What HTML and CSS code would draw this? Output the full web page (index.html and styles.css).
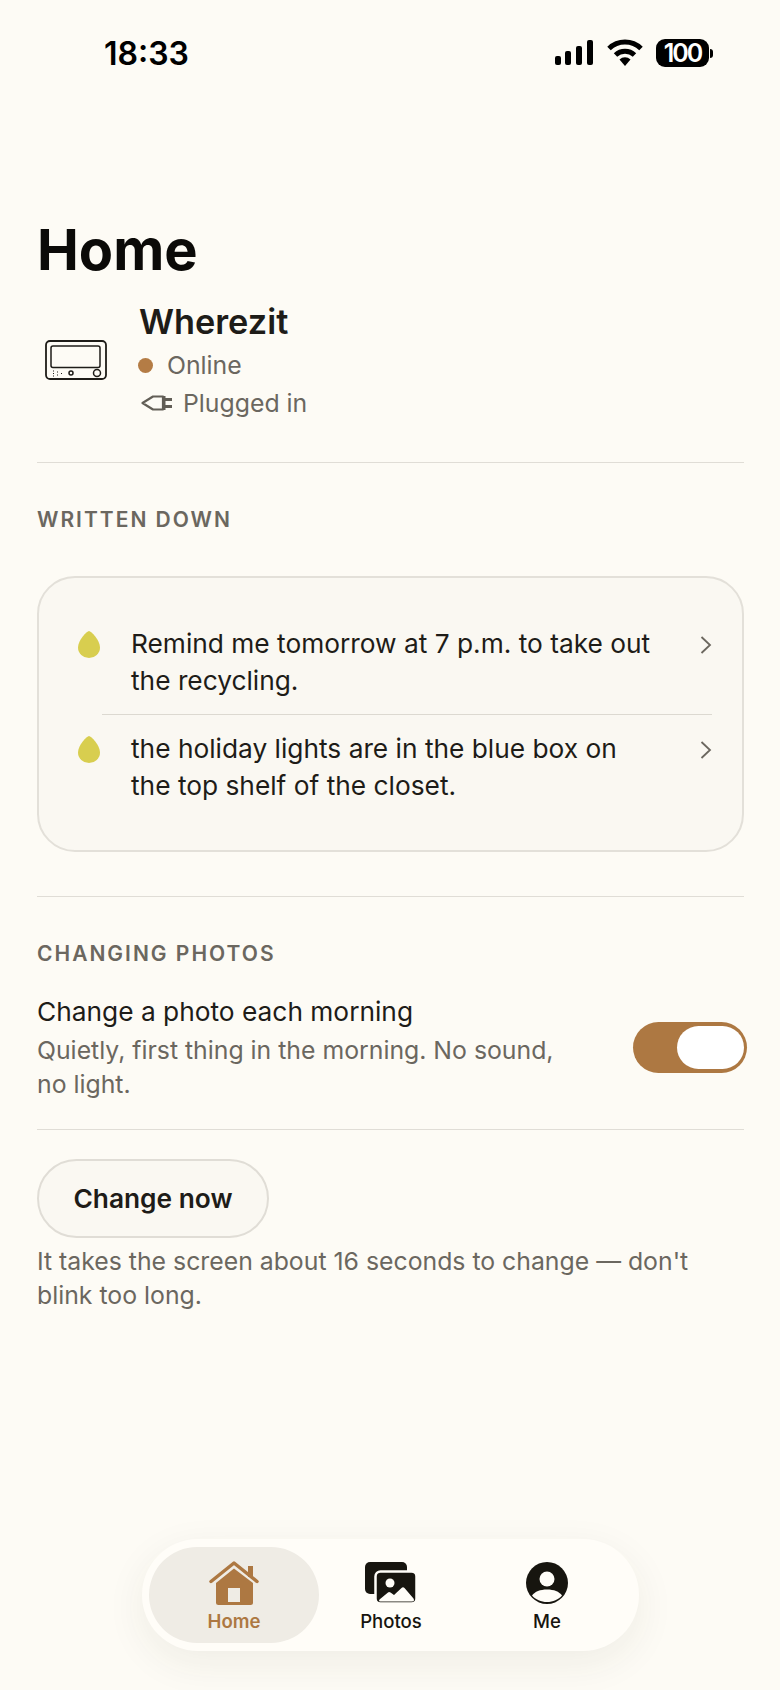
FILE: index.html
```html
<!DOCTYPE html>
<html lang="en">

<head>
    <meta charset="UTF-8">
    <meta name="viewport" content="width=device-width, initial-scale=1.0">
    <title>Home</title>
    <link rel="stylesheet" href="styles.css">
</head>

<body>
    <div class="screen">
        <div class="status-bar">
            <span class="time">18:33</span>
            <div class="status-icons">
                <svg width="40" height="26" viewBox="0 0 40 26">
                    <rect x="1" y="16" width="6" height="9" rx="2" />
                    <rect x="11" y="11" width="6" height="14" rx="2" />
                    <rect x="22" y="6" width="6" height="19" rx="2" />
                    <rect x="33" y="0" width="6" height="25" rx="2" />
                </svg>
                <svg width="36" height="28" viewBox="0 0 36 28">
                    <path d="M2 9.500a23 23 0 0 1 32 0" fill="none" stroke="#000" stroke-width="5" />
                    <path d="M8.500 16a14 14 0 0 1 19 0" fill="none" stroke="#000" stroke-width="5" />
                    <path d="M12.500 20.500a8 8 0 0 1 11 0L18 27z" />
                </svg>
                <div class="battery">
                    <span class="battery-level">100</span>
                    <span class="battery-cap"></span>
                </div>
            </div>
        </div>

        <main class="content">
            <h1 class="page-title">Home</h1>

            <div class="device">
                <svg class="device-icon" width="62" height="40" viewBox="0 0 62 40" fill="none" stroke="#1e1c18">
                    <rect x="1" y="1" width="60" height="38" rx="4" stroke-width="1.800" />
                    <rect x="6" y="6" width="49" height="21.500" rx="2" stroke-width="1.500" />
                    <circle cx="26" cy="33" r="2" stroke-width="1.500" />
                    <circle cx="52" cy="33" r="3.500" stroke-width="1.500" />
                    <path d="M8 31h1M8 33.500h1M8 36h1M12 32h1M12 35h1M16 33.500h1" stroke-width="1" />
                </svg>
                <div class="device-info">
                    <div class="device-name">Wherezit</div>
                    <div class="device-line online"><span class="dot"></span>Online</div>
                    <div class="device-line plugged">
                        <svg width="32" height="18" viewBox="0 0 32 18" fill="none" stroke="#625e56" stroke-width="2.200">
                            <path d="M1.500 9l10.500-6.500h10v13H12z" stroke-linejoin="round" />
                            <path d="M22 5.500h9M22 12.500h9M23 2v14" stroke-width="3" />
                        </svg>
                        Plugged in
                    </div>
                </div>
            </div>

            <section class="section written">
                <h2 class="section-label">WRITTEN DOWN</h2>
                <div class="notes-card">
                    <div class="note">
                        <svg class="drop" width="22" height="27" viewBox="0 0 22 27"><path d="M11 0C13 0 22 9 22 16.500a11 10.500 0 0 1-22 0C0 9 9 0 11 0z" /></svg>
                        <p class="note-text">Remind me tomorrow at 7 p.m. to take out the recycling.</p>
                        <svg class="chevron" width="12" height="18" viewBox="0 0 12 18"><path d="M1.500 1l8.500 8-8.500 8" /></svg>
                    </div>
                    <div class="note">
                        <svg class="drop" width="22" height="27" viewBox="0 0 22 27"><path d="M11 0C13 0 22 9 22 16.500a11 10.500 0 0 1-22 0C0 9 9 0 11 0z" /></svg>
                        <p class="note-text">the holiday lights are in the blue box on the top shelf of the closet.</p>
                        <svg class="chevron" width="12" height="18" viewBox="0 0 12 18"><path d="M1.500 1l8.500 8-8.500 8" /></svg>
                    </div>
                </div>
            </section>

            <section class="section changing">
                <h2 class="section-label">CHANGING PHOTOS</h2>
                <div class="setting">
                    <div class="setting-text">
                        <div class="setting-title">Change a photo each morning</div>
                        <p class="setting-desc">Quietly, first thing in the morning. No sound, no light.</p>
                    </div>
                    <div class="toggle"><span class="knob"></span></div>
                </div>
            </section>

            <section class="section action">
                <button class="change-btn">Change now</button>
                <p class="hint">It takes the screen about 16 seconds to change — don't blink too long.</p>
            </section>
        </main>

        <nav class="tab-bar">
            <div class="tab active">
                <svg width="50" height="44" viewBox="0 0 50 44">
                    <path d="M25 7.500L7 22v19.500A2.500 2.500 0 0 0 9.500 44h32a2.500 2.500 0 0 0 2.500-2.500V22z" fill="#ad7842" />
                    <rect x="19" y="27" width="12" height="14" fill="#efece5" />
                    <path d="M2 20.500L25 2l23 18.500" fill="none" stroke="#ad7842" stroke-width="3.500" stroke-linecap="round" stroke-linejoin="round" />
                    <rect x="39" y="5" width="5" height="11" fill="#ad7842" />
                </svg>
                <span>Home</span>
            </div>
            <div class="tab">
                <svg width="52" height="42" viewBox="0 0 52 42">
                    <rect x="0" y="0" width="42" height="32" rx="5" fill="#17150f" />
                    <rect x="10.500" y="9.500" width="41" height="32" rx="5" fill="#17150f" stroke="#fffdf8" stroke-width="2.500" />
                    <circle cx="25" cy="21" r="4.500" fill="#fffdf8" />
                    <path d="M16 39.500Q13 39.500 14.500 37.500L23 30.500Q24 29.500 25.500 30.500L29 33 36.500 26Q38 24.500 39.500 26L48.500 36.500Q50 39.500 47 39.500z" fill="#fffdf8" />
                </svg>
                <span>Photos</span>
            </div>
            <div class="tab">
                <svg width="44" height="42" viewBox="0 0 44 42">
                    <circle cx="22" cy="21" r="21" fill="#17150f" />
                    <circle cx="22" cy="17" r="7.500" fill="#fffdf8" />
                    <path d="M7 33.500c3-4 8-6 15-6s12 2 15 6c-3.500 4-9 6.500-15 6.500s-11.500-2.500-15-6.500z" fill="#fffdf8" />
                </svg>
                <span>Me</span>
            </div>
        </nav>
    </div>
</body>

</html>
```

FILE: styles.css
```css
* {
    box-sizing: border-box;
    margin: 0;
    padding: 0;
}

body {
    background: #fdfbf5;
    font-family: Inter, "Liberation Sans", sans-serif;
    color: #1e1c18;
}

.screen {
    position: relative;
    width: 780px;
    height: 1690px;
    overflow: hidden;
}

/* status bar */
.status-bar {
    display: flex;
    justify-content: space-between;
    align-items: center;
    padding: 36px 67px 0 104px;
    height: 70px;
}

.time {
    font-size: 32px;
    font-weight: 600;
    color: #000;
}

.status-icons {
    display: flex;
    align-items: center;
    gap: 13px;
}

.battery {
    display: flex;
    align-items: center;
    gap: 1px;
}

.battery-level {
    width: 53px;
    height: 28px;
    border-radius: 9px;
    background: #000;
    color: #fff;
    font-size: 25px;
    font-weight: 600;
    line-height: 28px;
    text-align: center;
    letter-spacing: -2px;
}

.battery-cap {
    width: 3px;
    height: 9px;
    border-radius: 0 3px 3px 0;
    background: #000;
}

/* page */
.content {
    padding: 0 36px 0 37px;
}

.page-title {
    margin-top: 145px;
    font-size: 56px;
    font-weight: 700;
    line-height: 70px;
    color: #0b0a08;
}

.device {
    display: flex;
    align-items: center;
    gap: 31px;
    padding: 0 0 40px 8px;
    margin-top: 15px;
}

.device-icon {
    margin-bottom: 2px;
}

.device-info {
    display: flex;
    flex-direction: column;
}

.device-name {
    padding-left: 1px;
    font-size: 34.300px;
    font-weight: 600;
    line-height: 44px;
}

.device-line {
    display: flex;
    align-items: center;
    font-size: 24.800px;
    line-height: 38px;
    color: #6b675f;
}

.online {
    margin-top: 2px;
}

.dot {
    width: 15px;
    height: 15px;
    margin-right: 14px;
    border-radius: 50%;
    background: #b47c45;
}

.plugged svg {
    margin: 0 10px 0 3px;
}

.section {
    border-top: 1px solid #e0ddd6;
}

.section-label {
    font-size: 21px;
    font-weight: 600;
    line-height: 26px;
    letter-spacing: 2px;
    color: #6b675f;
}

.written {
    padding: 44px 0 44px;
}

.notes-card {
    margin-top: 43px;
    padding: 47px 30px 31px 39px;
    border: 2px solid #e3e0d9;
    border-radius: 38px;
    background: #faf8f2;
}

.note {
    position: relative;
    display: flex;
    align-items: flex-start;
    gap: 31px;
    padding-bottom: 15px;
}

.note + .note {
    padding-top: 16px;
}

.note + .note::before {
    content: "";
    position: absolute;
    top: 0;
    left: 24px;
    right: 0;
    height: 1px;
    background: #dcd9d1;
}

.drop {
    flex: none;
    margin-top: 6px;
    fill: #d8ce4f;
}

.note-text {
    flex: 1;
    padding-right: 10px;
    font-size: 26.300px;
    line-height: 37px;
}

.chevron {
    flex: none;
    margin-top: 11px;
    fill: none;
    stroke: #6b675f;
    stroke-width: 1.800;
}

.changing {
    padding: 44px 0 28px;
}

.setting {
    display: flex;
    align-items: center;
    justify-content: space-between;
    margin-top: 26px;
}

.setting-text {
    width: 530px;
}

.setting-title {
    font-size: 26.300px;
    line-height: 38px;
}

.setting-desc {
    margin-top: 2px;
    font-size: 24.800px;
    line-height: 34px;
    color: #6b675f;
}

.toggle {
    display: flex;
    justify-content: flex-end;
    align-items: center;
    width: 114px;
    height: 51px;
    margin-right: -3px;
    padding-right: 3px;
    border-radius: 26px;
    background: #ad7842;
}

.knob {
    width: 67px;
    height: 43px;
    border-radius: 22px;
    background: #fff;
}

.action {
    padding-top: 29px;
}

.change-btn {
    display: block;
    width: 232px;
    height: 79px;
    border: 2px solid #e0ddd6;
    border-radius: 40px;
    background: #faf8f2;
    font-family: inherit;
    font-size: 26.300px;
    font-weight: 600;
    color: #1e1c18;
}

.hint {
    margin-top: 6px;
    font-size: 24.800px;
    line-height: 34px;
    color: #6b675f;
}

/* floating tabs */
.tab-bar {
    position: absolute;
    left: 142px;
    top: 1539px;
    display: flex;
    width: 497px;
    height: 112px;
    padding: 8px 7px;
    border-radius: 56px;
    background: #fffdf8;
    box-shadow: 0 12px 40px rgba(60, 50, 30, 0.07);
}

.tab {
    flex: none;
    display: flex;
    flex-direction: column;
    align-items: center;
    width: 156px;
    padding-top: 14px;
    font-size: 18.600px;
    font-weight: 500;
    color: #17150f;
}

.tab svg {
    height: 44px;
}

.tab span {
    margin-top: 5px;
    line-height: 22px;
}

.tab.active {
    width: 170px;
    margin-right: -6px;
    border-radius: 48px;
    background: #efece5;
    color: #ad7842;
    font-weight: 600;
}
```
